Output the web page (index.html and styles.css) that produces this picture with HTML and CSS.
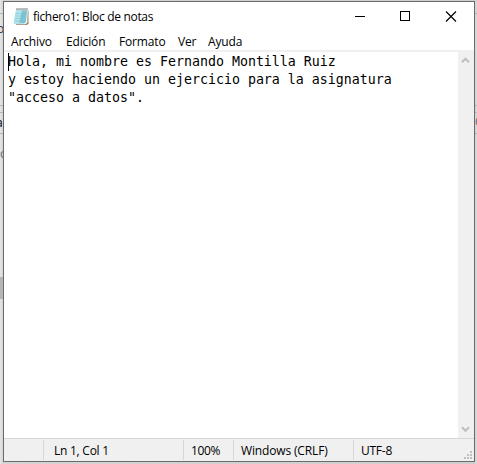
FILE: index.html
```html
<!DOCTYPE html>
<html lang="es">
<head>
<meta charset="utf-8">
<title>fichero1: Bloc de notas</title>
<link rel="stylesheet" href="styles.css">
</head>
<body>
<div class="behind" aria-hidden="true">
  <i class="rule rule-0"></i><i class="rule rule-1"></i><i class="rule rule-2"></i><i class="rule rule-3"></i><i class="thumb"></i>
  <span class="peek peek-o">o</span><span class="peek peek-a">a</span><span class="peek peek-c">ó</span><span class="peek peek-r">C</span>
</div>
<main class="window">
  <header class="titlebar">
    <svg class="app-icon" width="17" height="18" viewBox="0 0 17 18">
      <path d="M4 2.5h11.5v13l-1.5 1.5H3z" fill="#94876b"/>
      <path d="M3.2 2h11.6l-.5 12.5-1.8 1.8H1z" fill="#f5faf9"/>
      <path d="M3.2 2h10.9l-1.1 12-1.8 1.5H.7z" fill="#7fc4d5"/>
      <path d="M3.2 2h6L6 15.5H.7z" fill="#b2e3eb"/>
      <path d="M3 5.5h10.5M2.6 8h10.5M2.2 10.5h10.5M1.6 13h10.5" stroke="#75bdce" stroke-width=".5"/>
      <path d="M3 2h11.5" stroke="#c3d8d8"/>
      <path d="M3.5 1h11" stroke="#52605e" stroke-width="1.6" stroke-dasharray="1 1"/>
    </svg>
    <h1 class="title">fichero1: Bloc de notas</h1>
    <svg class="controls" width="108" height="12" viewBox="0 0 108 12" fill="none" stroke="#000" shape-rendering="crispEdges">
      <path d="M0 5.5h10M45.5 .5h9v9h-9z"/>
      <path d="M91 .5l10 10M101 .5l-10 10" shape-rendering="auto" stroke-width="1.15"/>
    </svg>
  </header>
  <nav class="menu"><span class="m1">Archivo</span><span class="m2">Edición</span><span class="m3">Formato</span><span class="m4">Ver</span><span class="m5">Ayuda</span></nav>
  <section class="editor">
    <pre class="text"><i class="caret"></i>Hola, mi nombre es Fernando Montilla Ruiz
y estoy haciendo un ejercicio para la asignatura
"acceso a datos".</pre>
    <div class="scroll">
      <svg width="9" height="7" viewBox="0 0 9 7"><path d="M1 5.2l3.5-3.5L8 5.2" fill="none" stroke="#bfbfbf" stroke-width="2.1"/></svg>
      <svg width="9" height="7" viewBox="0 0 9 7"><path d="M1 1.2l3.5 3.5L8 1.2" fill="none" stroke="#bfbfbf" stroke-width="2.1"/></svg>
    </div>
  </section>
  <footer class="status">
    <span class="cell c0"></span><span class="cell c1">Ln 1, Col 1</span><span class="cell c2">100%</span><span class="cell c3">Windows (CRLF)</span><span class="cell c4">UTF-8</span>
    <svg class="grip" width="8" height="8" viewBox="0 0 8 8" fill="#bfbfbf" shape-rendering="crispEdges"><path d="M6 0h2v2H6zM3 3h2v2H3zM6 3h2v2H6zM0 6h2v2H0zM3 6h2v2H3zM6 6h2v2H6z"/></svg>
  </footer>
</main>
</body>
</html>
```
FILE: styles.css
```css
* { box-sizing: border-box; }
body {
  position: relative;
  margin: 0;
  width: 477px;
  height: 464px;
  padding: 1px 2px 2px 3px;
  overflow: hidden;
  background: #d2d2d2;
  font: 12px "Open Sans", "Noto Sans", sans-serif;
  color: #000;
}
.behind { position: absolute; inset: 0; background: linear-gradient(90deg, #e6e6e6, #d4d4d4 3px, #cecece 474px, #dadada); }
.rule { position: absolute; left: 0; right: 0; height: 1px; background: #b6b6b6; }
.rule-0 { top: 13px; }
.rule-1 { top: 105px; }
.rule-2 { top: 112px; }
.rule-3 { top: 133px; }
.thumb { position: absolute; left: 0; top: 277px; width: 3px; height: 22px; background: #b5b5b5; }
.peek { position: absolute; line-height: 14px; }
.peek-o { left: -3px; top: 22px; color: #335; }
.peek-a { left: -4px; top: 116px; }
.peek-c { left: 0; top: 147px; color: #567; }
.peek-r { left: 475px; top: 115px; color: #666; }
.window {
  position: relative;
  display: flex;
  flex-direction: column;
  width: 472px;
  height: 461px;
  border: 1px solid #6b6b6b;
  background: #fff;
}
.titlebar { display: flex; height: 30px; flex: none; }
.app-icon { margin: 6px 0 0 9px; }
.title { margin: 6px 0 0 3px; width: 230px; font-size: 12px; font-weight: 400; line-height: 18px; letter-spacing: -.32px; white-space: nowrap; }
.controls { margin: 9px 0 0 92px; }
.menu { display: flex; height: 18px; flex: none; padding-left: 7px; line-height: 20px; letter-spacing: -.15px; white-space: nowrap; }
.m1 { width: 55px; }
.m2 { width: 53px; }
.m3 { width: 59px; }
.m4 { width: 30px; }
.editor { display: flex; flex: 1; justify-content: space-between; border-top: 2px solid #f0f0f0; }
.text { position: relative; margin: 0; padding: 1px 0 0 4px; font: 13.29px/18px "DejaVu Sans Mono", monospace; }
.caret { position: absolute; left: 4px; top: 1px; width: 1px; height: 18px; background: #000; }
.scroll { display: flex; flex-direction: column; justify-content: space-between; align-items: center; width: 16px; padding: 5px 1px 5px 0; background: #f0f0f0; }
.status { display: flex; flex: none; height: 23px; padding-top: 1px; border-top: 1px solid #d7d7d7; background: #f0f0f0; line-height: 22px; letter-spacing: -.15px; white-space: nowrap; }
.cell { height: 20px; border-right: 1px solid #d7d7d7; }
.c0 { width: 40px; }
.c1 { width: 140px; padding-left: 10px; letter-spacing: -.25px; }
.c2 { width: 50px; padding-left: 7px; letter-spacing: -.4px; }
.c3 { width: 120px; padding-left: 7px; }
.c4 { flex: 1; padding-left: 7px; border: 0; letter-spacing: -.25px; }
.grip { margin: 11px 2px 0 0; }
```
